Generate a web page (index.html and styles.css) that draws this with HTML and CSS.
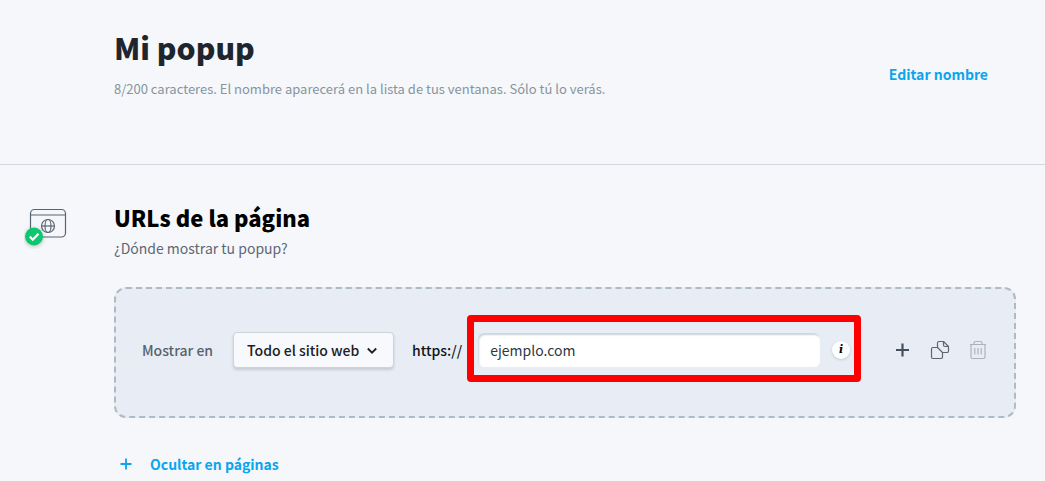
FILE: index.html
```html
<!DOCTYPE html>
<html lang="es">
  <head>
    <meta charset="utf-8">
    <title>Mi popup</title>
    <link rel="stylesheet" href="styles.css">
  </head>
  <body>
    <header class="header">
      <div class="header-text">
        <h1 class="title">Mi popup</h1>
        <p class="hint">8/200 caracteres. El nombre aparecerá en la lista de tus ventanas. Sólo tú lo verás.</p>
      </div>
      <a class="edit" href="#nombre">Editar nombre</a>
    </header>

    <main class="section">
      <div class="step">
        <svg width="44" height="44" viewBox="0 0 44 44" fill="none">
          <g stroke="#5a6572" stroke-width="1.2">
            <rect x="6.5" y="4.5" width="35" height="27.5" rx="4"/>
            <path d="M6.5 10h35"/>
            <circle cx="24" cy="21" r="6.5"/>
            <ellipse cx="24" cy="21" rx="3" ry="6.5"/>
            <path d="M17.5 21h13"/>
          </g>
          <circle class="step-done" cx="10" cy="31.5" r="9" fill="#0bc870"/>
          <path d="M5.8 31.5l3 3.2 5.7-6" stroke="#fff" stroke-width="2.2"/>
        </svg>
      </div>
      <div class="content">
        <h2 class="subtitle">URLs de la página</h2>
        <p class="question">¿Dónde mostrar tu popup?</p>

        <form class="card">
          <label class="label" for="scope">Mostrar en</label>
          <div class="select-wrap">
            <select class="select" id="scope">
              <option>Todo el sitio web</option>
            </select>
            <svg class="chevron" width="10" height="8" viewBox="0 0 10 8" fill="none" stroke="#1b2026" stroke-width="1.8">
              <path d="M.8 1.5L5 5.7l4.2-4.2"/>
            </svg>
          </div>
          <label class="protocol" for="url">https://</label>
          <div class="highlight">
            <input class="url" id="url" type="text" value="ejemplo.com">
            <button class="info" type="button" aria-label="Información">i</button>
          </div>
          <div class="actions">
            <button class="action" type="button" aria-label="Agregar">
              <svg width="20" height="20" viewBox="0 0 20 20" fill="none" stroke="#43505e" stroke-width="2.2">
                <path d="M10.5 3.5v13M4 10h13"/>
              </svg>
            </button>
            <button class="action" type="button" aria-label="Duplicar">
              <svg width="20" height="20" viewBox="0 0 20 20" fill="none" stroke="#5a6773" stroke-width="1.2" stroke-linejoin="round">
                <path d="M7.5 7.5H3A1.5 1.5 0 0 0 1.5 9v8A1.5 1.5 0 0 0 3 18.5h8a1.5 1.5 0 0 0 1.5-1.5v-4.5z"/>
                <path d="M7.5 7.5V3A1.5 1.5 0 0 1 9 1.5h4.5l5 5V11a1.5 1.5 0 0 1-1.5 1.5h-4.5"/>
                <path d="M13.5 1.5V5A1.5 1.5 0 0 0 15 6.5h3.5"/>
              </svg>
            </button>
            <button class="action" type="button" aria-label="Eliminar">
              <svg width="20" height="20" viewBox="0 0 20 20" fill="none" stroke="#aab3bd" stroke-width="1.2">
                <path d="M2 4.5h16M6 4.5V3a1.5 1.5 0 0 1 1.5-1.5h5A1.5 1.5 0 0 1 14 3v1.5"/>
                <path d="M3 4.5V17a1.5 1.5 0 0 0 1.5 1.5h11A1.5 1.5 0 0 0 17 17V4.500M6.8 8v6.5M10 8v6.5M13.2 8v6.5"/>
              </svg>
            </button>
          </div>
        </form>

        <a class="hide-link" href="#ocultar">
          <svg width="12" height="12" viewBox="0 0 12 12" fill="none" stroke="#0ba5ec" stroke-width="1.8">
            <path d="M6 .5v11M.5 6h11"/>
          </svg>
          Ocultar en páginas
        </a>
      </div>
    </main>
  </body>
</html>
```
FILE: styles.css
```css
* {
  box-sizing: border-box;
}

body {
  margin: 0;
  background-color: #f5f7fb;
  color: #1f252d;
  font-family: "Noto Sans CJK SC", "Noto Sans", sans-serif;
  font-size: 14px;
  line-height: 20px;
}

h1,
h2,
p {
  margin: 0;
}

.header {
  display: flex;
  align-items: flex-start;
  justify-content: space-between;
  padding: 27px 57px 65px 114px;
  border-bottom: 1px solid #d3d8de;
}

.title {
  font-size: 30px;
  font-weight: 900;
  line-height: 40px;
}

.hint {
  margin-top: 12px;
  color: #87949e;
  font-size: 13px;
}

.edit,
.hide-link {
  color: #0ba5ec;
  font-weight: 700;
  text-decoration: none;
}

.edit {
  margin-top: 37px;
}

.section {
  display: grid;
  grid-template-columns: 90px 1fr;
  padding: 38px 29px 0 24px;
}

.step svg {
  display: block;
  margin-top: 2px;
}

.step-done {
  filter: drop-shadow(0 1px 2px rgba(0, 0, 0, 0.25));
}

.subtitle {
  color: #000;
  font-size: 22px;
  font-weight: 900;
  line-height: 28px;
}

.question {
  margin-top: 7px;
  color: #5e6873;
}

.card {
  display: flex;
  align-items: center;
  margin-top: 29px;
  padding: 26px 26px 34px;
  border: 2px dashed #aebac5;
  border-radius: 12px;
  background-color: #e8edf5;
}

.label,
.protocol,
.select-wrap,
.actions {
  margin-top: 3px;
}

.label {
  color: #56636f;
  font-weight: 500;
}

.select-wrap {
  position: relative;
  margin-right: 18px;
  margin-left: 20px;
}

.select {
  appearance: none;
  display: block;
  height: 36px;
  padding: 0 33px 0 13px;
  border: 1px solid #ccd3da;
  border-radius: 4px;
  background-color: #f7f9fc;
  box-shadow: 0 2px 3px rgba(40, 55, 70, 0.18);
  color: #1b2026;
  font-family: inherit;
  font-size: 14px;
  font-weight: 500;
}

.chevron {
  position: absolute;
  top: 15px;
  right: 17px;
  pointer-events: none;
}

.protocol {
  color: #101418;
  font-weight: 500;
}

.highlight {
  display: flex;
  flex: 1;
  align-items: center;
  margin-left: 5px;
  padding: 11px 4px 8px;
  border: 7px solid #f00;
  border-radius: 4px;
}

.url {
  flex: 1;
  min-width: 0;
  height: 34px;
  padding: 0 12px;
  border: 0;
  border-radius: 6px;
  background-color: #fff;
  box-shadow: inset 1px 2px 2px #ccd2da;
  color: #2f363e;
  font-family: inherit;
  font-size: 14px;
}

.info {
  width: 18px;
  height: 18px;
  margin-left: 12px;
  padding: 0;
  border: 0;
  border-radius: 50%;
  background-color: #fff;
  box-shadow: 0 1px 3px rgba(40, 55, 70, 0.2);
  color: #000;
  font-family: "DejaVu Serif", serif;
  font-size: 11px;
  font-style: italic;
  font-weight: 700;
  line-height: 18px;
}

.actions {
  display: flex;
  gap: 18px;
  margin-left: 31px;
}

.action {
  padding: 0;
  border: 0;
  background: none;
}

.action svg {
  display: block;
}

.hide-link {
  display: flex;
  align-items: center;
  gap: 18px;
  margin: 36px 0 16px 6px;
}
```
